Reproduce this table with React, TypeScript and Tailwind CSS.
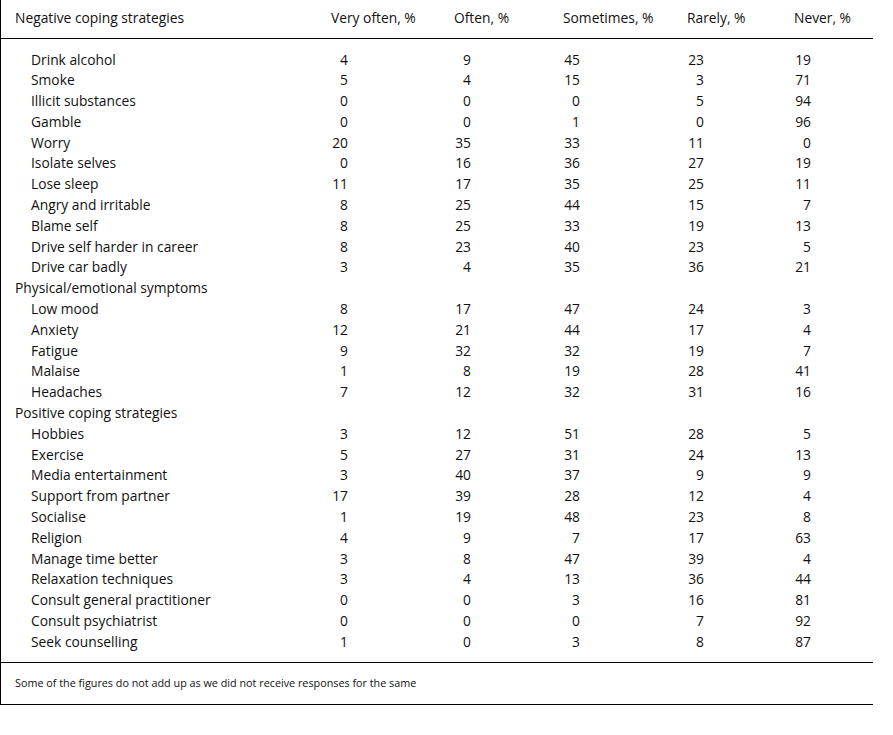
const negative: [string, number[]][] = [
  ['Drink alcohol', [4, 9, 45, 23, 19]],
  ['Smoke', [5, 4, 15, 3, 71]],
  ['Illicit substances', [0, 0, 0, 5, 94]],
  ['Gamble', [0, 0, 1, 0, 96]],
  ['Worry', [20, 35, 33, 11, 0]],
  ['Isolate selves', [0, 16, 36, 27, 19]],
  ['Lose sleep', [11, 17, 35, 25, 11]],
  ['Angry and irritable', [8, 25, 44, 15, 7]],
  ['Blame self', [8, 25, 33, 19, 13]],
  ['Drive self harder in career', [8, 23, 40, 23, 5]],
  ['Drive car badly', [3, 4, 35, 36, 21]],
]

const physical: [string, number[]][] = [
  ['Low mood', [8, 17, 47, 24, 3]],
  ['Anxiety', [12, 21, 44, 17, 4]],
  ['Fatigue', [9, 32, 32, 19, 7]],
  ['Malaise', [1, 8, 19, 28, 41]],
  ['Headaches', [7, 12, 32, 31, 16]],
]

const positive: [string, number[]][] = [
  ['Hobbies', [3, 12, 51, 28, 5]],
  ['Exercise', [5, 27, 31, 24, 13]],
  ['Media entertainment', [3, 40, 37, 9, 9]],
  ['Support from partner', [17, 39, 28, 12, 4]],
  ['Socialise', [1, 19, 48, 23, 8]],
  ['Religion', [4, 9, 7, 17, 63]],
  ['Manage time better', [3, 8, 47, 39, 4]],
  ['Relaxation techniques', [3, 4, 13, 36, 44]],
  ['Consult general practitioner', [0, 0, 3, 16, 81]],
  ['Consult psychiatrist', [0, 0, 0, 7, 92]],
  ['Seek counselling', [1, 0, 3, 8, 87]],
]

// column widths: label | very often | often | sometimes | rarely | never
const cols = 'grid grid-cols-[330px_123px_109px_124px_107px_80px]'

function DataRow({ label, values }: { label: string; values: number[] }) {
  return (
    <div className={`${cols} h-[20.8px] items-center`}>
      <div className="pl-[30px]">{label}</div>
      {values.map((v, i) => (
        <div key={i}>
          <span className="inline-block w-[17px] text-right">{v}</span>
        </div>
      ))}
    </div>
  )
}

function SectionTitle({ title }: { title: string }) {
  return (
    <div className="h-[20.8px] flex items-center pl-[14px]">{title}</div>
  )
}

export default function App() {
  return (
    <div className="bg-white w-[893px] h-[735px] text-[#111]" style={{ fontFamily: '"Open Sans", "Noto Sans", sans-serif' }}>
      <div className="w-[873px] border-l border-black text-[13.8px] leading-none">
        <div className={`${cols} h-[39px] items-center border-b border-black pb-[3px]`}>
          <div className="pl-[14px]">Negative coping strategies</div>
          <div>Very often, %</div>
          <div>Often, %</div>
          <div>Sometimes, %</div>
          <div>Rarely, %</div>
          <div>Never, %</div>
        </div>
        <div className="pt-[10px] pb-[10px] border-b border-black">
          {negative.map(([l, v]) => (
            <DataRow key={l} label={l} values={v} />
          ))}
          <SectionTitle title="Physical/emotional symptoms" />
          {physical.map(([l, v]) => (
            <DataRow key={l} label={l} values={v} />
          ))}
          <SectionTitle title="Positive coping strategies" />
          {positive.map(([l, v]) => (
            <DataRow key={l} label={l} values={v} />
          ))}
        </div>
        <div className="h-[42px] flex items-center pl-[14px] text-[10.8px] border-b border-black">
          Some of the figures do not add up as we did not receive responses for the same
        </div>
      </div>
    </div>
  )
}
